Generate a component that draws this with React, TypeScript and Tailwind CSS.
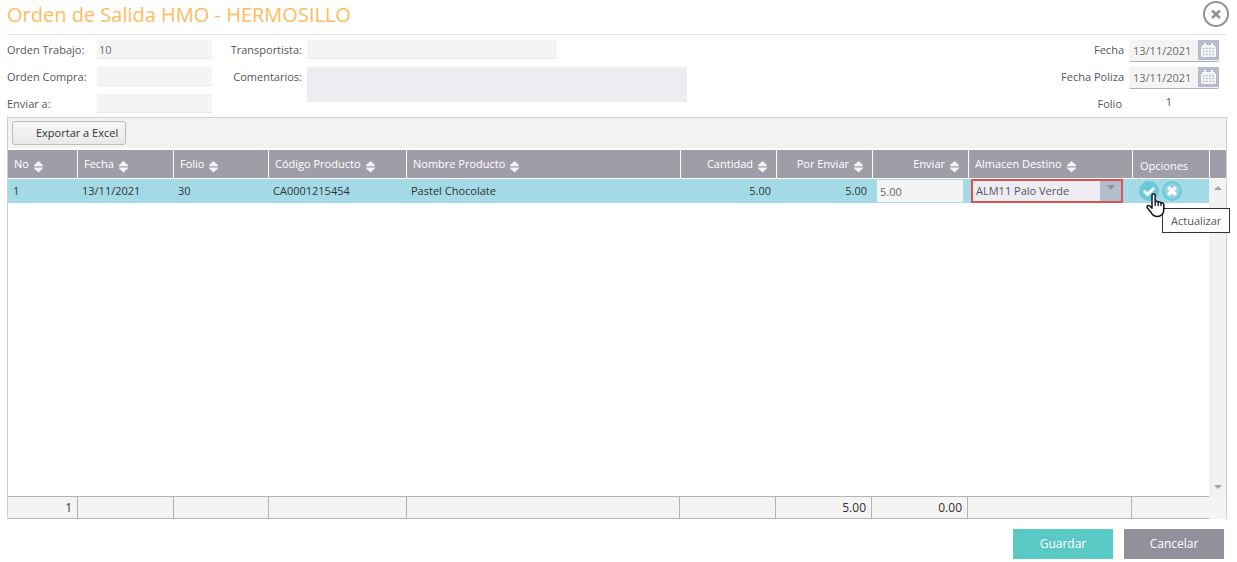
import { useState } from 'react';

const FONT = "font-['Open_Sans','Noto_Sans',sans-serif]";

const columns = [
  { header: 'No', width: 'w-[70px]', align: 'text-left', sortable: true, total: '1' },
  { header: 'Fecha', width: 'w-[96px]', align: 'text-left', sortable: true, total: '' },
  { header: 'Folio', width: 'w-[95px]', align: 'text-left', sortable: true, total: '' },
  { header: 'Código Producto', width: 'w-[138px]', align: 'text-left', sortable: true, total: '' },
  { header: 'Nombre Producto', width: '', align: 'text-left', sortable: true, total: '' },
  { header: 'Cantidad', width: 'w-[96px]', align: 'text-right', sortable: true, total: '' },
  { header: 'Por Enviar', width: 'w-[96px]', align: 'text-right', sortable: true, total: '5.00' },
  { header: 'Enviar', width: 'w-[96px]', align: 'text-right', sortable: true, total: '0.00' },
  { header: 'Almacen Destino', width: 'w-[164px]', align: 'text-left', sortable: true, total: '' },
  { header: 'Opciones', width: 'w-[77px]', align: 'text-left', sortable: false, total: '' },
];

function Columns() {
  return (
    <colgroup>
      {columns.map((col) => (
        <col key={col.header} className={col.width} />
      ))}
    </colgroup>
  );
}

function SortIcon() {
  return (
    <svg width="9" height="12" viewBox="0 0 9 12" fill="#f4f4f4" className="shrink-0 mt-[5px]">
      <path d="M4.5 0 L9 4.200 V5.200 H0 V4.200 Z" />
      <path d="M0 6.500 H9 V7.300 L4.500 11.500 L0 7.300 Z" />
    </svg>
  );
}

function CalendarIcon() {
  return (
    <svg width="15" height="14" viewBox="0 0 15 14">
      <path d="M1 2h13v2h1v9l-1 1H1l-1-1V4h1Z" fill="#f4f4f6" />
      <path d="M4 0v3M11 0v3" stroke="#f4f4f6" strokeWidth="2" />
      <path
        d="M2 5.500h11M2 8.500h11M2 11.500h11"
        stroke="#b4bccc"
        strokeWidth="1.600"
        strokeDasharray="1.600 1.500"
      />
    </svg>
  );
}

function HandCursor() {
  return (
    <svg width="19" height="25" viewBox="0 0 19 25" className="pointer-events-none absolute left-[7px] top-3 z-20">
      <path
        d="M6 2.500a1.600 1.600 0 0 1 3.200 0V9c.5-1 2.700-.9 3 .5.600-.9 2.500-.6 2.800.8.700-.8 2.800-.5 2.800 1.500V17c0 3.500-2.500 6.500-6.500 6.500-3.800 0-5-1.800-6.300-4.200L1.200 14.800c-1-1.900 1.300-3 2.800-1.500l2 2Z"
        fill="#fff"
        stroke="#111722"
        strokeWidth="1.500"
        strokeLinejoin="round"
      />
      <path d="M9.200 9v4M12.200 9.500V13M15 10.500V13" stroke="#111722" strokeWidth="1.300" />
    </svg>
  );
}

function TextField({ id, label, defaultValue, inputWidth, labelClass }: any) {
  return (
    <div className="flex items-start h-[19px]">
      <label htmlFor={id} className={`${labelClass} leading-5`}>
        {label}
      </label>
      <input
        id={id}
        type="text"
        defaultValue={defaultValue}
        className={`${inputWidth} h-[19px] px-[2px] bg-[#f4f4f4] border-b border-[#e8e8e8] text-[#6b6b6b] outline-none`}
      />
    </div>
  );
}

function DateField({ id, label, defaultValue }: any) {
  return (
    <div className="flex items-start">
      <label htmlFor={id} className="leading-5 pr-[5px]">
        {label}
      </label>
      <div className="flex items-start w-[90px] h-[22px] bg-[#f4f4f4] border-b border-[#b0b0b4] rounded-b-xs">
        <input
          id={id}
          type="text"
          defaultValue={defaultValue}
          className="w-[69px] h-[21px] pl-1 bg-transparent text-[#6b6b6b] outline-none"
        />
        <button
          type="button"
          aria-label={`Elegir ${label}`}
          className="flex items-center justify-center w-[21px] h-5 bg-[#b4bccc]"
        >
          <CalendarIcon />
        </button>
      </div>
    </div>
  );
}

export default function OrdenSalida() {
  const [enviar, setEnviar] = useState('5.00');
  const [almacen, setAlmacen] = useState('ALM11');

  return (
    <div className={`${FONT} flex flex-col min-h-screen pl-[7px] pr-[10px] pb-[3px] bg-white text-[11px] text-[#55555c]`}>
      <header className="flex items-start justify-between h-[35px] border-b border-[#e2e2e2]">
        <h1 className="text-[20px] leading-[30px] font-normal text-[#ffbb60]">Orden de Salida HMO - HERMOSILLO</h1>
        <button type="button" aria-label="Cerrar" className="-mr-[2px] mt-px">
          <svg width="26" height="26" viewBox="0 0 26 26" fill="none" stroke="#938f9b">
            <circle cx="13" cy="13" r="12" strokeWidth="2" />
            <path d="M9 9.500l8 7.500M17 9.500l-8 7.500" strokeWidth="2.600" />
          </svg>
        </button>
      </header>

      <form className="flex items-start h-[82px] pt-[5px]">
        <div className="flex flex-col gap-2">
          <TextField id="trabajo" label="Orden Trabajo:" defaultValue="10" inputWidth="w-[115px]" labelClass="w-[90px]" />
          <TextField id="compra" label="Orden Compra:" inputWidth="w-[115px]" labelClass="w-[90px]" />
          <TextField id="enviar-a" label="Enviar a:" inputWidth="w-[115px]" labelClass="w-[90px]" />
        </div>
        <div className="flex flex-col gap-2">
          <TextField
            id="transportista"
            label="Transportista:"
            inputWidth="w-[250px]"
            labelClass="w-[95px] pr-[5px] text-right"
          />
          <div className="flex items-start">
            <label htmlFor="comentarios" className="w-[95px] pr-[5px] leading-5 text-right">
              Comentarios:
            </label>
            <textarea id="comentarios" className="w-[380px] h-[35px] bg-[#edecf2] resize-none outline-none" />
          </div>
        </div>
        <div className="flex flex-col items-end gap-[5px] ml-auto mr-2">
          <DateField id="fecha" label="Fecha" defaultValue="13/11/2021" />
          <DateField id="fecha-poliza" label="Fecha Poliza" defaultValue="13/11/2021" />
          <div className="flex items-start">
            <label htmlFor="folio" className="pr-[7px] leading-5">
              Folio
            </label>
            <output id="folio" className="w-[90px] pr-[10px] text-center">
              1
            </output>
          </div>
        </div>
      </form>

      <section className="flex flex-col flex-1 border-x border-t border-[#d0d0d0]">
        <div className="h-[30px] pl-1 pt-[3px] bg-[#f2f2f2]">
          <button
            type="button"
            className="h-6 pl-[23px] pr-[7px] rounded-[3px] border border-[#bcbcbc] bg-linear-to-b from-[#f6f6f6] to-[#e9e9e9] text-[#333]"
          >
            Exportar a Excel
          </button>
        </div>

        <div className="flex mt-[2px] text-white">
          <table className="flex-1 table-fixed border-separate border-spacing-0">
            <Columns />
            <thead>
              <tr className="h-[28px] bg-[#a09da8]">
                {columns.map((col) => (
                  <th
                    key={col.header}
                    className={`${col.align} p-0 pl-[6px] pr-[9px] border-r border-white font-medium whitespace-nowrap last:pl-[7px] last:pt-1`}
                  >
                    <span className="inline-flex items-center gap-[5px]">
                      {col.header}
                      {col.sortable && <SortIcon />}
                    </span>
                  </th>
                ))}
              </tr>
            </thead>
          </table>
          <div className="w-4 bg-[#a09da8]" />
        </div>

        <div className="flex flex-1 mt-px">
          <div className="flex-1">
            <table className="w-full table-fixed border-separate border-spacing-0 text-[#333]">
              <Columns />
              <tbody>
                <tr className="h-6 bg-[#a4dae6]">
                  <td className="px-[5px] py-0">1</td>
                  <td className="px-1 py-0">13/11/2021</td>
                  <td className="px-1 py-0">30</td>
                  <td className="px-1 py-0">CA0001215454</td>
                  <td className="px-1 py-0">Pastel Chocolate</td>
                  <td className="px-[5px] py-0 text-right">5.00</td>
                  <td className="px-[5px] py-0 text-right">5.00</td>
                  <td className="px-[5px] py-0">
                    <input
                      type="text"
                      aria-label="Enviar"
                      value={enviar}
                      onChange={(e) => setEnviar(e.target.value)}
                      className="block w-full h-[22px] px-[3px] bg-[#f4f4f4] text-[#6b6b6b] outline-none"
                    />
                  </td>
                  <td className="px-[3px] py-0">
                    <div className="relative w-[152px]">
                      <select
                        aria-label="Almacen Destino"
                        value={almacen}
                        onChange={(e) => setAlmacen(e.target.value)}
                        className="block w-full h-6 pl-[3px] pt-px appearance-none border-2 border-[#d9534f] bg-[#edecf2] text-[#55555c] outline-none"
                      >
                        <option value="ALM11">ALM11 Palo Verde</option>
                      </select>
                      <span className="pointer-events-none absolute right-[2px] top-[2px] flex justify-center w-[21px] h-5 pt-1 bg-[#b4bccc]">
                        <svg width="8" height="5" viewBox="0 0 8 5" fill="#93939b">
                          <path d="M0 0h8L4 5Z" />
                        </svg>
                      </span>
                    </div>
                  </td>
                  <td className="pl-[7px] py-0">
                    <div className="relative flex gap-[3px]">
                      <button type="button" aria-label="Actualizar">
                        <svg width="20" height="20" viewBox="0 0 20 20" className="block">
                          <circle cx="10" cy="10" r="10" fill="#6ac8d8" />
                          <path d="M5 9.800l3.500 3.500L15 7" fill="none" stroke="#fff" strokeWidth="3" />
                        </svg>
                      </button>
                      <button type="button" aria-label="Cancelar edición">
                        <svg width="20" height="20" viewBox="0 0 20 20" className="block">
                          <circle cx="10" cy="10" r="9" fill="#8fd3e1" stroke="#6ac8d8" strokeWidth="2" />
                          <path d="M6.200 6.200l7.600 7.600M13.800 6.200l-7.600 7.600" stroke="#fff" strokeWidth="3.600" />
                        </svg>
                      </button>
                      <HandCursor />
                      <span
                        role="tooltip"
                        className="absolute left-[23px] top-[27px] z-10 h-[25px] px-2 leading-[23px] border border-[#333] bg-white text-[#55555c]"
                      >
                        Actualizar
                      </span>
                    </div>
                  </td>
                </tr>
              </tbody>
            </table>
          </div>
          <div className="flex flex-col justify-between items-center w-[17px] py-[7px] bg-[#f1f1f1]">
            <svg width="8" height="4" viewBox="0 0 8 4" fill="#a3a3a3">
              <path d="M0 4h8L4 0Z" />
            </svg>
            <svg width="8" height="4" viewBox="0 0 8 4" fill="#a3a3a3">
              <path d="M0 0h8L4 4Z" />
            </svg>
          </div>
        </div>

        <div className="flex bg-[#f4f4f4]">
          <table className="flex-1 table-fixed border-separate border-spacing-0 text-[12px] text-[#333]">
            <Columns />
            <tbody>
              <tr className="h-[23px]">
                {columns.map((col) => (
                  <td
                    key={col.header}
                    className="py-0 pl-0 pr-[5px] text-right border-y border-r border-[#b4b4b4] last:border-r-0"
                  >
                    {col.total}
                  </td>
                ))}
              </tr>
            </tbody>
          </table>
          <div className="w-[17px]" />
        </div>
      </section>

      <footer className="flex justify-end gap-[11px] pt-[10px] pr-[3px] text-[12px] text-white">
        <button type="button" className="w-[100px] h-[30px] bg-[#5ac8c4]">
          Guardar
        </button>
        <button type="button" className="w-[100px] h-[30px] bg-[#938f9b]">
          Cancelar
        </button>
      </footer>
    </div>
  );
}
